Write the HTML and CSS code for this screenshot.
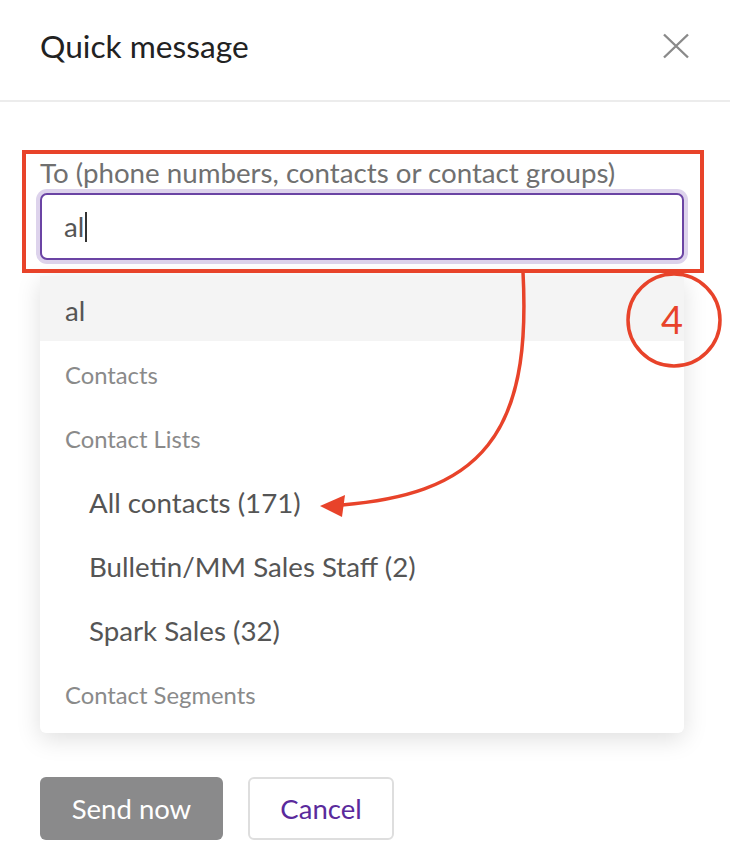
FILE: index.html
```html
<!DOCTYPE html>
<html>
<head>
<meta charset="utf-8">
<link rel="stylesheet" href="styles.css">
</head>
<body>
<div class="modal">
  <header class="modal-header">
    <h1 class="title">Quick message</h1>
    <button class="close" aria-label="Close">
      <svg width="26" height="26" viewBox="0 0 26 26"><path d="M1 1.5L25 24.5M25 1.5L1 24.5" stroke="#8a8a8a" stroke-width="2.4" fill="none"/></svg>
    </button>
  </header>
  <div class="modal-body">
    <label class="field-label">To (phone numbers, contacts or contact groups)</label>
    <div class="input"><span class="typed">al</span><span class="caret"></span></div>
    <div class="dropdown">
      <div class="opt active">al</div>
      <div class="group">Contacts</div>
      <div class="group">Contact Lists</div>
      <div class="opt sub">All contacts (171)</div>
      <div class="opt sub">Bulletin/MM Sales Staff (2)</div>
      <div class="opt sub">Spark Sales (32)</div>
      <div class="group">Contact Segments</div>
    </div>
    <div class="actions">
      <button class="btn primary">Send now</button>
      <button class="btn secondary">Cancel</button>
    </div>
  </div>
</div>
<svg class="annot" width="730" height="864" viewBox="0 0 730 864">
  <rect x="24" y="152" width="678" height="119" fill="none" stroke="#e8432a" stroke-width="4"/>
  <circle cx="674" cy="320" r="46" fill="none" stroke="#e8432a" stroke-width="3.5"/>
  <text x="672" y="334" font-family="Lato" font-size="38" fill="#e8432a" text-anchor="middle">4</text>
  <path d="M523 272 C 526 330, 524 400, 488 445 C 455 487, 400 500, 342 505" fill="none" stroke="#e8432a" stroke-width="3.5"/>
  <path d="M320 506 L345 495 L342 517 Z" fill="#e8432a"/>
</svg>
</body>
</html>
```
FILE: styles.css
```css
* { box-sizing: border-box; }
html, body { margin: 0; padding: 0; background: #fff; }
body { font-family: Lato, "Open Sans", sans-serif; width: 730px; height: 864px; overflow: hidden; position: relative; }
.modal-header { height: 102px; border-bottom: 2px solid #ececec; display: flex; align-items: center; justify-content: space-between; padding: 0 41px 8px 40px; }
.title { margin: 0; font-weight: 400; font-size: 31.7px; color: #222; }
.close { border: 0; background: none; padding: 0; display: flex; }
.modal-body { padding: 54px 46px 0 40px; }
.field-label { display: block; font-size: 27.7px; color: #707070; line-height: 34px; margin-bottom: 3px; }
.input { height: 67px; border: 2px solid #6b44a4; border-radius: 7px; box-shadow: 0 0 0 4px #ddd3ec; display: flex; align-items: center; padding-left: 22px; background: #fff; }
.typed { font-size: 27.7px; color: #555; }
.caret { width: 2px; height: 30px; background: #333; margin-left: 1px; }
.dropdown { margin-top: 16px; background: #fff; box-shadow: 0 6px 24px rgba(0,0,0,0.13); border-radius: 0 0 6px 6px; padding-bottom: 8px; }
.opt, .group { height: 64px; display: flex; align-items: center; padding-left: 25px; padding-top: 3px; }
.opt { font-size: 27.7px; color: #555; }
.opt.active { background: #f4f4f4; height: 65px; }
.opt.sub { padding-left: 49px; }
.group { font-size: 23.8px; color: #8a8a8a; }
.actions { display: flex; gap: 25px; margin-top: 44px; }
.btn { font-family: Lato, sans-serif; font-size: 27.5px; height: 63px; border-radius: 6px; padding: 0; }
.primary { background: #8a8a8b; color: #fff; border: 0; width: 183px; }
.secondary { background: #fff; color: #5a2a9c; border: 2px solid #dedede; width: 146px; }
.annot { position: absolute; left: 0; top: 0; pointer-events: none; }
```
